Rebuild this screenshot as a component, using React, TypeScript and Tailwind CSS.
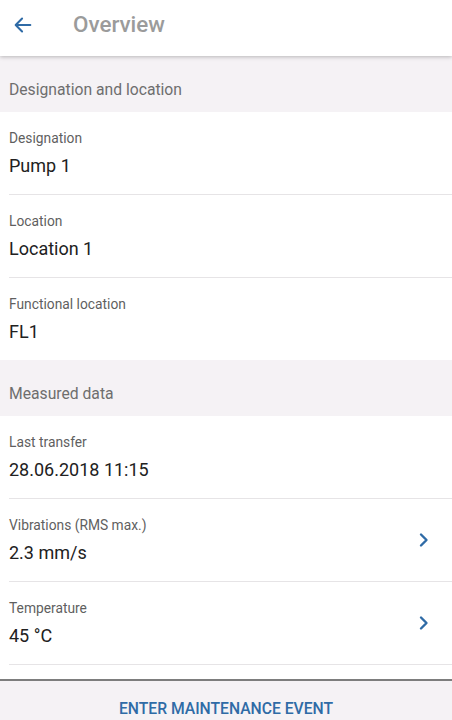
import React from "react";

type Field = {
  label: string;
  value: string;
  link?: boolean;
};

const location: Field[] = [
  { label: "Designation", value: "Pump 1" },
  { label: "Location", value: "Location 1" },
  { label: "Functional location", value: "FL1" },
];

const measured: Field[] = [
  { label: "Last transfer", value: "28.06.2018 11:15" },
  { label: "Vibrations (RMS max.)", value: "2.3 mm/s", link: true },
  { label: "Temperature", value: "45 °C", link: true },
];

const SectionTitle = ({ title }: { title: string }) => (
  <div className="bg-[#f5f2f5] px-[9px] pt-6 pb-3 text-[15.7px] leading-5 text-[#6e6e6e]">
    {title}
  </div>
);

const Row = ({ field, last }: { field: Field; last?: boolean }) => (
  <div className="pl-[9px]">
    <div
      className={
        "flex items-center pr-4 pt-4 pb-4 " +
        (last ? "" : "border-b border-[#e6e4e6]")
      }
    >
      <div className="flex-1">
        <div className="text-[13.8px] leading-5 text-[#5f5f5f]">{field.label}</div>
        <div className="mt-1.5 text-[18px] leading-6 text-[#212121]">{field.value}</div>
      </div>
      {field.link && (
        <svg width="14" height="16" viewBox="0 0 14 16" className="mr-[5px]">
          <path
            d="M4 2.5 L9.5 8 L4 13.5"
            fill="none"
            stroke="#2f6ba6"
            strokeWidth="2.4"
            strokeLinecap="round"
            strokeLinejoin="round"
          />
        </svg>
      )}
    </div>
  </div>
);

const App = () => {
  return (
    <div className="flex h-[720px] w-[452px] flex-col overflow-hidden bg-white font-['Roboto',sans-serif]">
      <header className="relative z-10 flex h-14 items-center bg-white pb-1.5 shadow-[0_1px_4px_rgba(0,0,0,0.25)]">
        <svg width="22" height="22" viewBox="0 0 24 24" className="ml-[12px]">
          <path
            d="M20 12 H4.5 M11 5 L4 12 L11 19"
            fill="none"
            stroke="#2f6ba6"
            strokeWidth="2.2"
            strokeLinecap="round"
            strokeLinejoin="round"
          />
        </svg>
        <h1 className="ml-[39px] text-[22.4px] font-medium text-[#9b9b9b]">Overview</h1>
      </header>

      <section>
        <SectionTitle title="Designation and location" />
        {location.map((f, i) => (
          <Row key={f.label} field={f} last={i === location.length - 1} />
        ))}
      </section>

      <section>
        <SectionTitle title="Measured data" />
        {measured.map((f) => (
          <Row key={f.label} field={f} />
        ))}
      </section>

      <div className="flex-1" />

      <footer className="flex h-[41px] items-start justify-center border-t-2 border-[#7d7d7d] bg-[#f5f2f5] pt-[18px]">
        <span className="text-[15.7px] leading-5 font-medium text-[#2f6ba6]">
          ENTER MAINTENANCE EVENT
        </span>
      </footer>
    </div>
  );
};

export default App;
